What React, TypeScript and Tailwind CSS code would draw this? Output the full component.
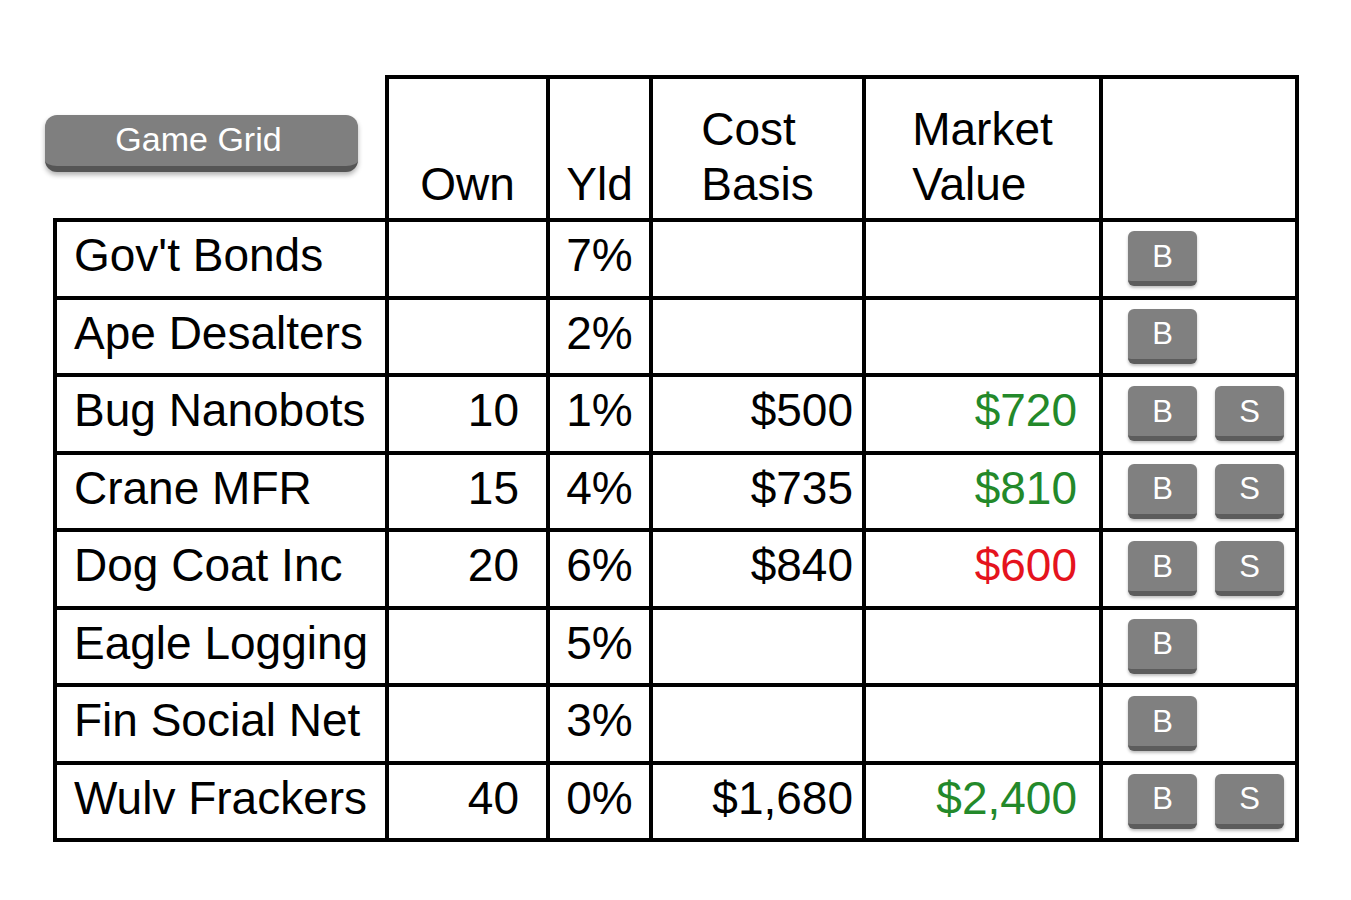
import React from "react";

type Row = {
  name: string;
  own?: number;
  yld: string;
  cost?: string;
  market?: string;
  up?: boolean;
};

const rows: Row[] = [
  { name: "Gov't Bonds", yld: "7%" },
  { name: "Ape Desalters", yld: "2%" },
  { name: "Bug Nanobots", own: 10, yld: "1%", cost: "$500", market: "$720", up: true },
  { name: "Crane MFR", own: 15, yld: "4%", cost: "$735", market: "$810", up: true },
  { name: "Dog Coat Inc", own: 20, yld: "6%", cost: "$840", market: "$600", up: false },
  { name: "Eagle Logging", yld: "5%" },
  { name: "Fin Social Net", yld: "3%" },
  { name: "Wulv Frackers", own: 40, yld: "0%", cost: "$1,680", market: "$2,400", up: true },
];

function KeyButton({ label }: { label: string }) {
  return (
    <button className="flex h-[55px] w-[69px] items-center justify-center rounded-[6px] border-b-[5px] border-[#5c5c5c] bg-[#808080] text-[31px] leading-none text-white shadow-[0_2px_3px_rgba(0,0,0,0.25)]">
      {label}
    </button>
  );
}

export default function App() {
  const cell = "border-[4px] border-black";
  return (
    <div
      className="h-[900px] w-[1351px] bg-white pl-[53px] pt-[75px] text-black"
      style={{ fontFamily: '"Liberation Sans", Arial, sans-serif' }}
    >
      <table className="table-fixed border-collapse text-[46px]">
        <colgroup>
          <col className="w-[332px]" />
          <col className="w-[161px]" />
          <col className="w-[103px]" />
          <col className="w-[213px]" />
          <col className="w-[237px]" />
          <col className="w-[196px]" />
        </colgroup>
        <thead>
          <tr className="h-[143px]">
            <th className="border-0 p-0 align-top font-normal">
              <div className="-ml-[10px] mt-[38px] flex h-[57px] w-[313px] items-center justify-center rounded-[12px] border-b-[6px] border-[#555] bg-[#7f7f7f] pb-[2px] pr-[6px] text-[34px] text-white shadow-[0_3px_5px_rgba(0,0,0,0.3)]">
                Game Grid
              </div>
            </th>
            <th className={`${cell} pb-[6px] text-center align-bottom font-normal leading-[55px]`}>
              Own
            </th>
            <th className={`${cell} pb-[6px] text-center align-bottom font-normal leading-[55px]`}>
              Yld
            </th>
            <th className={`${cell} pb-[6px] text-center align-bottom font-normal leading-[55px]`}>
              <span className="inline-block text-left">
                Cost
                <br />
                Basis
              </span>
            </th>
            <th className={`${cell} pb-[6px] text-center align-bottom font-normal leading-[55px]`}>
              <span className="inline-block text-left">
                Market
                <br />
                Value
              </span>
            </th>
            <th className={cell}></th>
          </tr>
        </thead>
        <tbody>
          {rows.map((r) => (
            <tr key={r.name} className="h-[77.5px]">
              <td className={`${cell} whitespace-nowrap pb-[7px] pl-[17px] leading-none`}>{r.name}</td>
              <td className={`${cell} pb-[7px] pr-[27px] text-right leading-none`}>{r.own ?? ""}</td>
              <td className={`${cell} pb-[7px] text-center leading-none`}>{r.yld}</td>
              <td className={`${cell} pb-[7px] pr-[9px] text-right leading-none`}>{r.cost ?? ""}</td>
              <td
                className={`${cell} pb-[7px] pr-[22px] text-right leading-none ${
                  r.up ? "text-[#23892a]" : "text-[#e5131d]"
                }`}
              >
                {r.market ?? ""}
              </td>
              <td className={`${cell} pl-[25px]`}>
                <div className="flex gap-[18px]">
                  <KeyButton label="B" />
                  {r.own !== undefined && <KeyButton label="S" />}
                </div>
              </td>
            </tr>
          ))}
        </tbody>
      </table>
    </div>
  );
}
